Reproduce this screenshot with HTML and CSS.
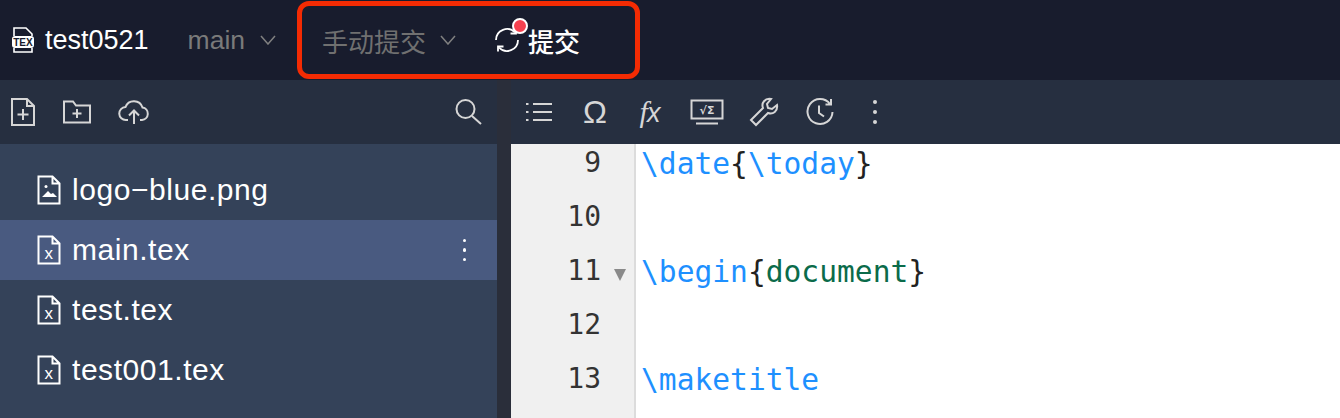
FILE: index.html
```html
<!DOCTYPE html>
<html lang="zh">
<head>
<meta charset="utf-8">
<title>test0521</title>
<link rel="stylesheet" href="styles.css">
</head>
<body>
<header class="topbar">
  <svg class="tex-icon" viewBox="0 0 22 26"><path d="M2 9V1h12l6 6v2M20 21v4H2v-4" class="ln"/><rect x="0" y="9" width="22" height="12" rx="3" fill="#fff"/><text x="11" y="18.500" class="tex-text">TEX</text></svg>
  <span class="project">test0521</span>
  <span class="branch">main</span>
  <svg class="chev" viewBox="0 0 16 10"><path d="M1 1l7 8 7-8"/></svg>
  <div class="highlight">
    <span class="mode">手动提交</span>
    <svg class="chev" viewBox="0 0 16 10"><path d="M1 1l7 8 7-8"/></svg>
    <span class="submit">
      <span class="sync">
        <svg viewBox="0 0 26 26" class="sync-svg"><path d="M2 13A11 11 0 0 1 21 5.500M24 13A11 11 0 0 1 5 20.500"/><path d="M22 1.500v5h-5.500M4 24.500v-5h5.500"/></svg>
        <i class="dot"></i>
      </span>
      <span class="submit-text">提交</span>
    </span>
  </div>
</header>
<main class="workspace">
  <aside class="side">
    <div class="toolbar side-tools">
      <svg class="ic" width="26" height="30" viewBox="0 0 26 30"><path d="M2 2h15l7 7v19H2zM17 2v7h7M13 12v11M7.500 17.500h11"/></svg>
      <svg class="ic" width="30" height="26" viewBox="0 0 30 26"><path d="M2 2.500h9l3 4h14v17H2zM15 10v9M10.500 14.500h9"/></svg>
      <svg class="ic" width="32" height="26" viewBox="0 0 32 26"><path d="M10 21H8A6.500 6.500 0 0 1 7.500 8 9 9 0 0 1 24.500 8.500 6.300 6.300 0 0 1 24 21h-2M16 25V12M11 16.500l5-5 5 5"/></svg>
      <svg class="ic search" width="30" height="28" viewBox="0 0 30 28"><circle cx="11.500" cy="11" r="9"/><path d="M18 18l9 8"/></svg>
    </div>
    <ul class="files">
      <li class="file"><svg class="ficon" viewBox="0 0 24 30"><path d="M1.500 1.500h14l7 7v20h-21zM15.500 1.500v7h7"/><circle cx="9" cy="11.500" r="1.500" class="fill"/><path d="M5 22l6-6 3 3 2-1 4 4z" class="fill"/></svg><span>logo−blue.png</span></li>
      <li class="file active"><svg class="ficon" viewBox="0 0 24 30"><path d="M1.500 1.500h14l7 7v20h-21zM15.500 1.500v7h7"/><text x="12" y="24" class="x">x</text></svg><span>main.tex</span><i class="more"><b></b><b></b><b></b></i></li>
      <li class="file"><svg class="ficon" viewBox="0 0 24 30"><path d="M1.500 1.500h14l7 7v20h-21zM15.500 1.500v7h7"/><text x="12" y="24" class="x">x</text></svg><span>test.tex</span></li>
      <li class="file"><svg class="ficon" viewBox="0 0 24 30"><path d="M1.500 1.500h14l7 7v20h-21zM15.500 1.500v7h7"/><text x="12" y="24" class="x">x</text></svg><span>test001.tex</span></li>
    </ul>
  </aside>
  <div class="divider"></div>
  <section class="editor">
    <div class="toolbar edit-tools">
      <svg class="ic list-ic" width="28" height="22" viewBox="0 0 28 22"><path d="M8 3h19M8 11h19M8 19h19M1 3h2.500M1 11h2.500M1 19h2.500"/></svg>
      <span class="tool-glyph omega">Ω</span>
      <span class="tool-glyph fx"><span class="fx-f">f</span><span class="fx-x">x</span></span>
      <svg class="ic" width="34" height="26" viewBox="0 0 34 26"><path d="M1.500 1.500h31v18h-31zM6 24.500h22"/><text x="17" y="15" class="sqrt">√Σ</text></svg>
      <svg class="ic" width="30" height="30" viewBox="0 0 30 30"><path d="M2 23l12-12c-2-5 2-10 8-9l-4 5 1 4 4 1 5-4c1 6-4 10-9 8L7 28z"/></svg>
      <svg class="ic clock-ic" width="28" height="28" viewBox="0 0 28 28"><path d="M24 6A12.500 12.500 0 1 0 26.500 14M25 1v5.500h-5.500M13 7.500V15l5 3.500"/></svg>
      <i class="more tool-more"><b></b><b></b><b></b></i>
    </div>
    <div class="code">
      <div class="line"><span class="num">9</span><span class="fold"></span><span class="src"><span class="cmd">\date</span>{<span class="cmd">\today</span>}</span></div>
      <div class="line"><span class="num">10</span><span class="fold"></span><span class="src"></span></div>
      <div class="line"><span class="num">11</span><span class="fold"><i class="tri"></i></span><span class="src"><span class="cmd">\begin</span>{<span class="env">document</span>}</span></div>
      <div class="line"><span class="num">12</span><span class="fold"></span><span class="src"></span></div>
      <div class="line"><span class="num">13</span><span class="fold"></span><span class="src"><span class="cmd">\maketitle</span></span></div>
      <div class="line"><span class="num"></span><span class="fold"></span><span class="src"></span></div>
    </div>
  </section>
</main>
</body>
</html>
```

FILE: styles.css
```css
* { box-sizing: border-box; }
html, body { margin: 0; padding: 0; }
body {
  width: 1340px;
  height: 418px;
  overflow: hidden;
  background: #fff;
  font-family: "Liberation Sans", "Noto Sans CJK SC", sans-serif;
}
.topbar {
  height: 80px;
  background: #181c2d;
  display: flex;
  align-items: center;
  padding-left: 12px;
}
.tex-icon { width: 22px; height: 26px; flex: none; overflow: visible; }
.ln { fill: none; stroke: #fff; stroke-width: 1.6; }
.tex-text { font: 700 10px "Liberation Sans", sans-serif; fill: #181c2d; text-anchor: middle; }
.project { margin-left: 11px; font-size: 27px; color: #fff; }
.branch { margin-left: 39px; font-size: 26.500px; color: #7a7a7a; }
.chev { width: 16px; height: 10px; margin-left: 15px; flex: none; fill: none; stroke: #808080; stroke-width: 1.5; }
.highlight {
  margin-left: 21px;
  height: 78px;
  width: 343px;
  border: 5.500px solid #f42b03;
  border-radius: 12px;
  display: flex;
  align-items: center;
  padding-left: 20px;
}
.mode { font: 26px "Noto Sans CJK SC", sans-serif; color: #707070; }
.highlight .chev { margin-left: 14px; }
.submit { display: flex; align-items: center; margin-left: 38px; }
.sync { position: relative; width: 26px; height: 26px; }
.sync-svg { width: 26px; height: 26px; fill: none; stroke: #fff; stroke-width: 1.8; display: block; }
.dot {
  position: absolute;
  top: -9px;
  left: 18px;
  width: 16px;
  height: 16px;
  background: #f5414f;
  border: 2px solid #fff;
  border-radius: 50%;
}
.submit-text { margin-left: 8px; font: 500 26px "Noto Sans CJK SC", sans-serif; color: #fff; }
.workspace { display: flex; height: 338px; }
.side { width: 497px; background: #344259; flex: none; }
.divider { width: 14px; background: #2a2e3a; flex: none; }
.editor { flex: 1; min-width: 0; }
.toolbar { height: 64px; background: #262f40; display: flex; align-items: center; }
.ic { flex: none; fill: none; stroke: #d6d6d6; stroke-width: 2; }
.side-tools { padding-left: 10px; gap: 26px; }
.search { margin-left: auto; margin-right: 13px; }
.files { list-style: none; margin: 0; padding: 16px 0 0; }
.file { height: 60px; display: flex; align-items: center; padding-left: 37px; color: #fff; font-size: 30px; letter-spacing: 0.55px; }
.file.active { background: #495a80; }
.ficon { width: 24px; height: 30px; margin-right: 11px; flex: none; fill: none; stroke: #fff; stroke-width: 2; }
.ficon .fill { fill: #fff; stroke: none; }
.x { font: 17px "Liberation Sans", sans-serif; fill: #fff; stroke: none; text-anchor: middle; }
.more { margin-left: auto; margin-right: 31px; display: flex; flex-direction: column; gap: 6px; }
.more b { width: 3.500px; height: 3.500px; border-radius: 50%; background: #fff; display: block; }
.edit-tools { padding-left: 14px; gap: 25px; }
.list-ic { margin-right: 2px; }
.clock-ic { margin-left: 2px; }
.tool-glyph { color: #d6d6d6; line-height: 1; width: 30px; text-align: center; flex: none; }
.omega { font: 32px "Liberation Sans", sans-serif; }
.fx { font-size: 29px; }
.fx-f { font: italic 30px "Liberation Serif", serif; }
.fx-x { font: italic 27px "Liberation Sans", sans-serif; margin-left: -1px; }
.sqrt { font: 700 11px "DejaVu Sans", sans-serif; fill: #d6d6d6; stroke: none; text-anchor: middle; }
.tool-more { margin: 0 0 0 14px; }
.tool-more b { background: #d6d6d6; width: 4px; height: 4px; }
.code { background: #fff; height: 274px; overflow: hidden; font: 29.600px "DejaVu Sans Mono", monospace; }
.line { display: flex; height: 54px; line-height: 40px; color: #222; }
.num { width: 90px; background: #f0f0f0; text-align: right; color: #333; font-size: 28px; line-height: 37px; flex: none; }
.fold { width: 33px; background: #f0f0f0; flex: none; position: relative; }
.tri {
  position: absolute;
  left: 13px;
  top: 17px;
  border-left: 6px solid transparent;
  border-right: 6px solid transparent;
  border-top: 12px solid #8a8a8a;
}
.src { flex: 1; border-left: 2px solid #dcdcdc; padding-left: 5px; white-space: pre; }
.cmd { color: #1e90ff; }
.env { color: #0b6b4a; }
```
